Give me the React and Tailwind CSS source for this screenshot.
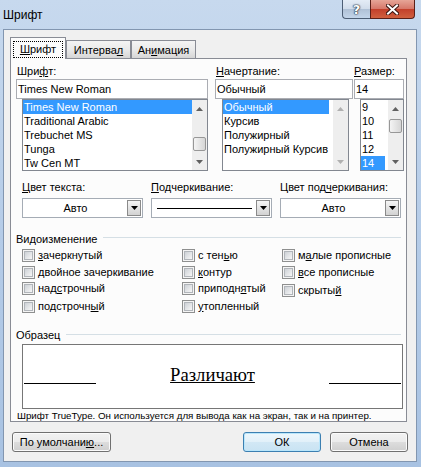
import React from 'react';

const U = ({ children }) => <span className="underline">{children}</span>;

function Arrow({ up, color }) {
  return (
    <svg width="7" height="4" viewBox="0 0 7 4">
      <path d={up ? 'M0 4L3.5 0L7 4Z' : 'M0 0H7L3.5 4Z'} fill={color} />
    </svg>
  );
}

function ScrollBar({ thumb, disabled }) {
  const glyph = disabled ? '#b0b0b0' : '#606060';
  return (
    <div className="w-[15px] h-full shrink-0 flex flex-col bg-[#eeeeee]">
      <div className="h-[17px] flex items-center justify-center">
        <Arrow up color={glyph} />
      </div>
      <div className="flex-1 flex flex-col">{thumb}</div>
      <div className="h-[17px] flex items-center justify-center">
        <Arrow color={glyph} />
      </div>
    </div>
  );
}

function Thumb({ className }) {
  return (
    <div
      className={`${className} h-[14px] mx-px rounded-[2px] border border-[#979797] bg-linear-to-r from-[#f4f4f4] to-[#d6d6d6]`}
    />
  );
}

function ListBox({ items, sel, boxClass, rowsClass, thumb, disabled }) {
  return (
    <div className={`${boxClass} h-[72px] border border-[#828790] bg-white flex`}>
      <div className={`flex-1 ${rowsClass}`}>
        {items.map((t) => (
          <div
            key={t}
            className={`h-[14px] leading-[14px] pl-px whitespace-nowrap overflow-hidden ${
              t === sel ? 'bg-[#3399ff] text-white' : ''
            }`}
          >
            {t}
          </div>
        ))}
      </div>
      <ScrollBar thumb={thumb} disabled={disabled} />
    </div>
  );
}

function Input({ value }) {
  return (
    <div className="h-[20px] border border-[#abadb3] bg-white pl-px flex items-center">{value}</div>
  );
}

function Combo({ children, center }) {
  return (
    <div className="h-[20px] border border-[#a5acb5] bg-white flex p-px">
      <div className={`flex-1 flex items-center ${center ? 'justify-center' : 'px-[4px]'}`}>{children}</div>
      <div className="w-[14px] h-full border border-[#8a8a8a] bg-linear-to-b from-[#f6f6f6] to-[#d2d2d2] flex items-center justify-center">
        <Arrow color="#000" />
      </div>
    </div>
  );
}

function Check({ children, className = '' }) {
  return (
    <div className={`flex items-center h-[13px] ${className}`}>
      <div className="w-[13px] h-[13px] shrink-0 border border-[#8e8f8f] bg-[#f4f4f4] p-px">
        <div className="w-full h-full border border-[#b1b5ba] bg-linear-to-br from-[#cdd1d6] to-[#f7f7f7]" />
      </div>
      <span className="ml-[3px] whitespace-nowrap">{children}</span>
    </div>
  );
}

function Button({ children, className = '', def }) {
  return (
    <div
      className={`${className} h-[20px] rounded-[3px] border flex items-center justify-center ${
        def
          ? 'border-[#3c7fb1] bg-[linear-gradient(to_bottom,#eef7fc_0%,#e1f0f9_50%,#d2e8f5_50%,#c9e3f3_100%)] shadow-[inset_0_0_0_1px_#b9e6fb]'
          : 'border-[#707070] bg-[linear-gradient(to_bottom,#f2f2f2_0%,#ebebeb_50%,#dddddd_50%,#cfcfcf_100%)] shadow-[inset_0_0_0_1px_#fbfbfb]'
      }`}
    >
      {children}
    </div>
  );
}

export default function App() {
  return (
    <div className="w-[421px] h-[467px] overflow-hidden bg-linear-to-b from-[#c7d9ee] via-[#b5cce8] to-[#a8c2e2] font-['Liberation_Sans',sans-serif] text-[11px] leading-[13px] text-black select-none">
      {/* Title bar */}
      <div className="h-[29px] flex items-start">
        <div className="pl-[3px] pt-[8px] text-[12px] leading-[14px]">Шрифт</div>
        <div className="ml-auto mr-[6px] flex">
          <div className="w-[28px] h-[19px] rounded-bl-[4px] border border-t-0 border-r-0 border-[#4d5e75] bg-[linear-gradient(to_bottom,#e4ecf6_0%,#d2ddeb_48%,#b0c1d6_52%,#c3d5ea_100%)] flex items-center justify-center">
            <span className="font-['DejaVu_Sans',sans-serif] font-bold text-[13px] leading-none text-white [text-shadow:0_0_1px_#1d2a3a,0_0_1px_#1d2a3a,0_0_2px_#1d2a3a]">
              ?
            </span>
          </div>
          <div className="w-[45px] h-[19px] rounded-br-[4px] border border-t-0 border-[#5a2018] bg-[linear-gradient(to_bottom,#e6a597_0%,#d6786a_48%,#c3402b_52%,#d0603f_100%)] flex items-center justify-center">
            <svg width="13" height="11" viewBox="0 0 13 11">
              <path d="M2 1.5L11 9.5M11 1.5L2 9.5" stroke="#3b1510" strokeWidth="4" strokeLinecap="square" />
              <path d="M2 1.5L11 9.5M11 1.5L2 9.5" stroke="#ffffff" strokeWidth="2" strokeLinecap="square" />
            </svg>
          </div>
        </div>
      </div>

      {/* Client area */}
      <div className="ml-[3px] w-[414px] h-[433px] border border-[#8296b0] bg-[#f0f0f0]">
        {/* Tabs */}
        <div className="pt-[7px] pl-[6px] h-[28px] flex items-end">
          <div className="relative z-10 w-[56px] h-[22px] -mb-px border border-b-0 border-[#898c95] bg-[#fcfcfc] flex justify-center pt-[3px]">
            <div className="h-[17px] px-[6px] border border-dotted border-black leading-[14px]">
              <U>Ш</U>рифт
            </div>
          </div>
          <div className="w-[65px] h-[18px] border border-b-0 border-[#898c95] bg-linear-to-b from-[#f4f4f4] via-[#eaeaea] to-[#d6d6d6] text-center pt-[3px]">
            Интерва<U>л</U>
          </div>
          <div className="w-[65px] h-[18px] border border-b-0 border-[#898c95] bg-linear-to-b from-[#f4f4f4] via-[#eaeaea] to-[#d6d6d6] text-center pt-[3px]">
            Ан<U>и</U>мация
          </div>
        </div>

        {/* Tab page */}
        <div className="ml-[6px] w-[397px] h-[364px] border border-[#898c95] bg-[#fcfcfc]">
          <div className="pt-[6px] pl-[5px] flex">
            <div className="w-[192px]">
              <div className="pl-px h-[13px]">
                Шри<U>ф</U>т:
              </div>
              <div className="mt-px">
                <Input value="Times New Roman" />
              </div>
              <ListBox
                boxClass="ml-[6px] w-[186px]"
                rowsClass=""
                items={['Times New Roman', 'Traditional Arabic', 'Trebuchet MS', 'Tunga', 'Tw Cen MT']}
                sel="Times New Roman"
                thumb={<Thumb className="mt-[20px]" />}
              />
            </div>
            <div className="ml-[7px] w-[138px]">
              <div className="pl-px h-[13px]">
                <U>Н</U>ачертание:
              </div>
              <div className="mt-px">
                <Input value="Обычный" />
              </div>
              <ListBox
                boxClass="ml-[7px] w-[127px]"
                rowsClass="pr-[4px]"
                items={['Обычный', 'Курсив', 'Полужирный', 'Полужирный Курсив']}
                sel="Обычный"
                disabled
              />
            </div>
            <div className="ml-px w-[50px]">
              <div className="h-[13px]">
                <U>Р</U>азмер:
              </div>
              <div className="mt-px">
                <Input value="14" />
              </div>
              <ListBox
                boxClass="ml-[6px] w-[44px]"
                rowsClass="pr-[3px]"
                items={['9', '10', '11', '12', '14']}
                sel="14"
                thumb={<Thumb className="mt-[2px]" />}
              />
            </div>
          </div>

          {/* Colour / underline */}
          <div className="mt-[10px] pl-[11px] flex gap-[8px]">
            <div className="w-[121px]">
              <div className="h-[13px]">
                <U>Ц</U>вет текста:
              </div>
              <div className="mt-[4px]">
                <Combo center>Авто</Combo>
              </div>
            </div>
            <div className="w-[121px]">
              <div className="h-[13px]">
                <U>П</U>одчеркивание:
              </div>
              <div className="mt-[4px]">
                <Combo>
                  <div className="w-full h-px bg-black" />
                </Combo>
              </div>
            </div>
            <div className="w-[121px]">
              <div className="h-[13px] whitespace-nowrap">
                Цвет под<U>ч</U>еркивания:
              </div>
              <div className="mt-[4px]">
                <Combo center>Авто</Combo>
              </div>
            </div>
          </div>

          {/* Effects */}
          <div className="mt-[15px] pl-[5px] pr-[5px] flex items-start">
            <span className="h-[13px]">Видоизменение</span>
            <div className="flex-1 ml-[6px] mt-[4px] h-px bg-[#d5dfe5]" />
          </div>
          <div className="mt-[3px] pl-[11px] grid grid-cols-[160px_100px_1fr] gap-y-[3.5px]">
            <Check>
              <U>з</U>ачеркнутый
            </Check>
            <Check>
              с тен<U>ь</U>ю
            </Check>
            <Check>
              м<U>а</U>лые прописные
            </Check>
            <Check>двойное зачеркивание</Check>
            <Check>
              <U>к</U>онтур
            </Check>
            <Check>
              <U>в</U>се прописные
            </Check>
            <Check>
              над<U>с</U>трочный
            </Check>
            <Check>
              приподн<U>я</U>тый
            </Check>
            <Check className="mt-[1.5px]">
              скрыты<U>й</U>
            </Check>
            <Check>
              подстрочн<U>ы</U>й
            </Check>
            <Check>
              <U>у</U>топленный
            </Check>
            <div />
          </div>

          {/* Sample */}
          <div className="mt-[16px] pl-[5px] pr-[5px] flex items-start">
            <span className="h-[13px]">Образец</span>
            <div className="flex-1 ml-[6px] mt-[5px] h-px bg-[#d5dfe5]" />
          </div>
          <div className="mt-[1.5px] ml-[11px] w-[381px] h-[65px] border border-[#767676] bg-white px-px flex justify-between items-start">
            <div className="mt-[38px] w-[72px] h-px bg-black" />
            <span className="mt-[19px] font-['Liberation_Serif',serif] text-[18.67px] leading-[22px] underline">
              Различают
            </span>
            <div className="mt-[38px] w-[72px] h-px bg-black" />
          </div>
          <div className="pl-[6px] h-[13px] text-[9.75px] whitespace-nowrap">
            Шрифт TrueType. Он используется для вывода как на экран, так и на принтер.
          </div>
        </div>

        {/* Buttons */}
        <div className="mt-[10px] px-[8px] flex">
          <Button className="w-[99px]">
            По умолчани<U>ю</U>...
          </Button>
          <div className="flex-1" />
          <Button className="w-[78px]" def>
            ОК
          </Button>
          <Button className="w-[78px] ml-[9px]">Отмена</Button>
        </div>
      </div>
    </div>
  );
}
